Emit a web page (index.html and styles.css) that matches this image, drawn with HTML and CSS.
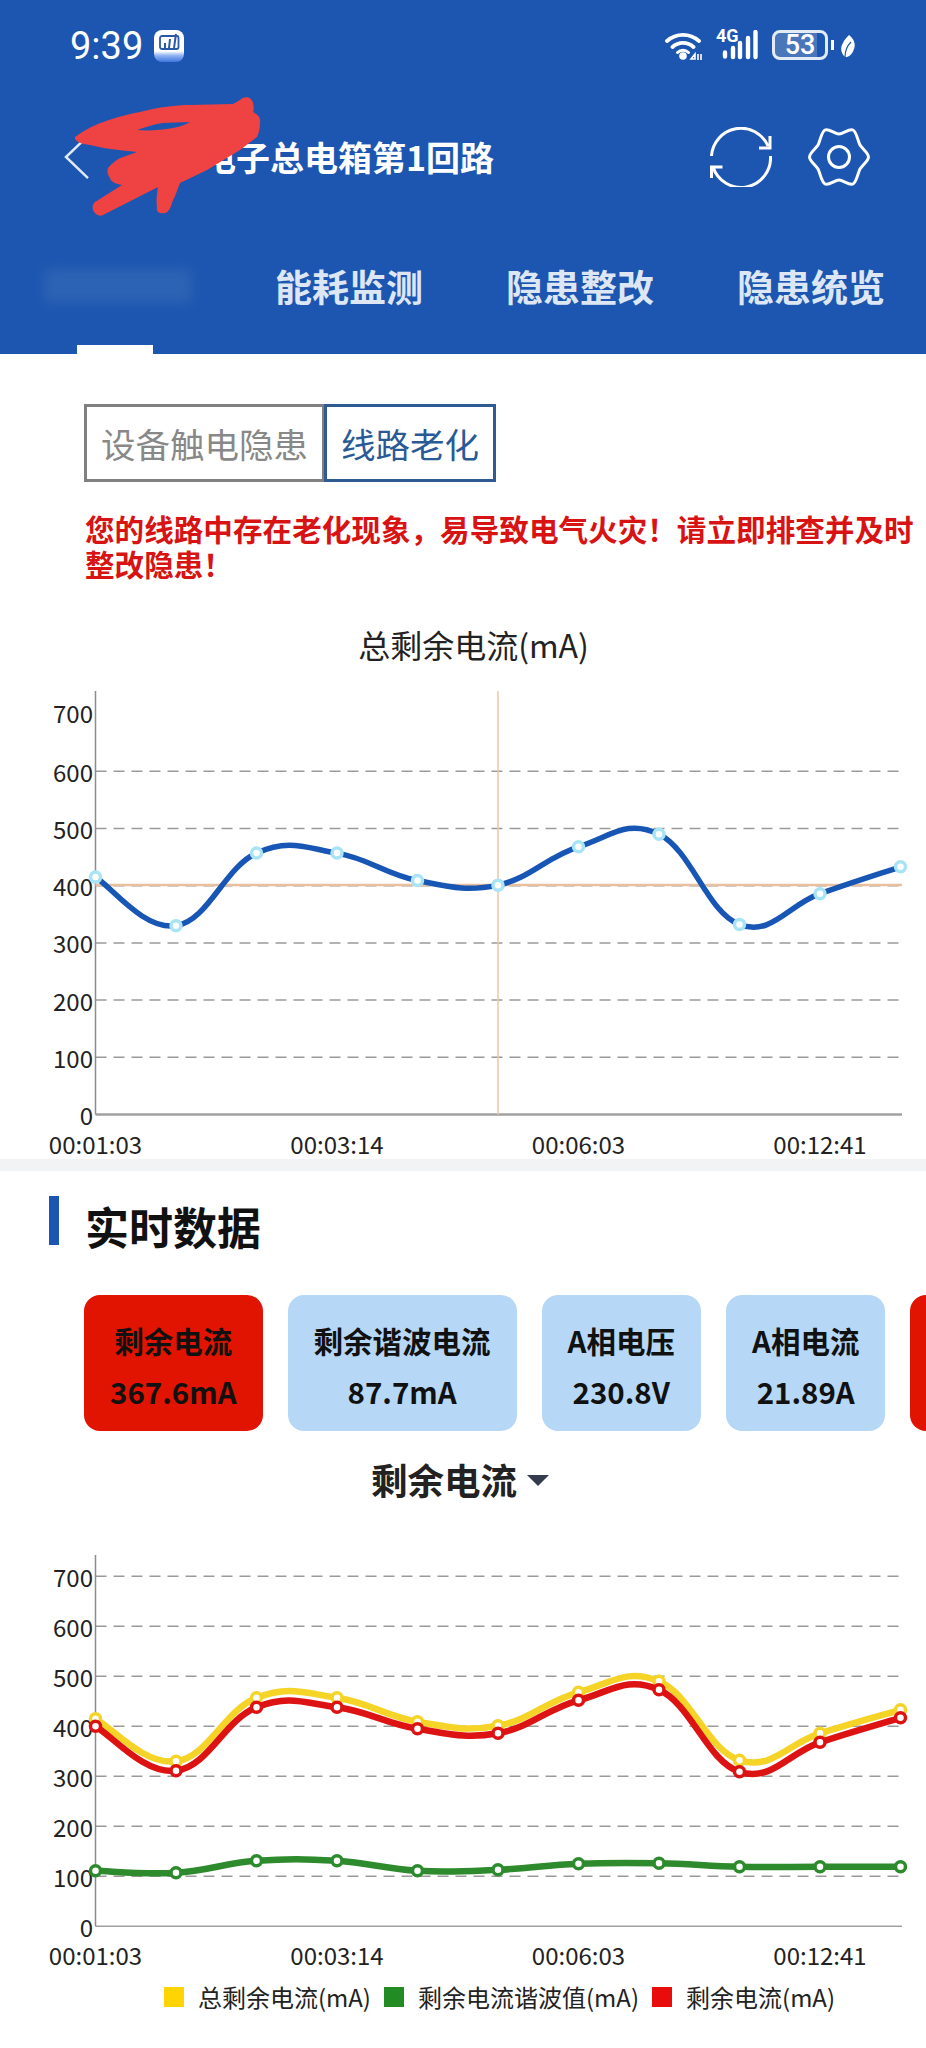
FILE: index.html
```html
<!DOCTYPE html>
<html lang="en">
<head>
  <meta charset="UTF-8">
  <meta name="viewport" content="width=device-width, initial-scale=1.0">
  <title>电子总电箱第1回路</title>
  <link rel="stylesheet" href="styles.css">
</head>
<body>

  <header class="header">
    <div class="status">
      <div class="status-left">
        <span class="time">9:39</span>
        <svg class="app-badge" viewBox="0 0 30 32">
          <defs>
            <linearGradient id="badgeFill" x1="0" y1="0" x2="0" y2="1">
              <stop offset="0.66" stop-color="#ffffff"/>
              <stop offset="0.8" stop-color="#8fb2f2"/>
              <stop offset="1" stop-color="#3f76df"/>
            </linearGradient>
          </defs>
          <rect width="30" height="32" rx="8" fill="url(#badgeFill)"/>
          <path d="M8 6h15a1.500 1.500 0 0 1 1.500 1.500V17a2 2 0 0 1-2 2H8a2 2 0 0 1-2-2V8a2 2 0 0 1 2-2z" fill="none" stroke="#2a5aa6" stroke-width="1.800"/>
          <path d="M11 18v-5M15 18l1-9M20 18l2-14" fill="none" stroke="#2a5aa6" stroke-width="2"/>
        </svg>
      </div>
      <div class="status-right">
        <svg class="wifi" viewBox="0 0 38 30">
          <path d="M2 11a24 24 0 0 1 32 0M7.500 17a15.500 15.500 0 0 1 21 0" fill="none" stroke="#fff" stroke-width="3.800" stroke-linecap="round"/>
          <path d="M12.500 22.500a8 8 0 0 1 11 0" fill="none" stroke="#fff" stroke-width="3" stroke-linecap="round"/>
          <circle cx="18" cy="26" r="3.800" fill="#fff"/>
          <path d="M26 29l4-5v5zM33 24v6M36 24v6" fill="none" stroke="#fff" stroke-width="1.600"/>
        </svg>
        <div class="signal">
          <span class="net">4G</span>
          <svg class="bars" viewBox="0 0 38 30">
            <path d="M5 22.500v4M13 18v9M20 13v14M28 8v19M35.500 2v25" fill="none" stroke="#fff" stroke-width="4.400" stroke-linecap="round"/>
          </svg>
        </div>
        <div class="battery"><span>53</span></div>
        <span class="battery-nub"></span>
        <svg class="leaf" viewBox="0 0 16 24">
          <path d="M9 1c5 4 7 9 5 14-1 4-4 7-7 8-1 0-2 0-3-1-3-4-4-8-1-13 1-3 4-6 6-8z" fill="#fff"/>
          <path d="M5 23c0-7 2-11 6-15" fill="none" stroke="#1c56b0" stroke-width="1.200"/>
        </svg>
      </div>
    </div>

    <div class="nav">
      <svg class="back" viewBox="0 0 28 48">
        <path d="M26 2L3 24l23 22" fill="none" stroke="#dfe8f5" stroke-width="2.600"/>
      </svg>
      <div class="nav-title">电子总电箱第1回路</div>
      <div class="nav-icons">
        <svg class="nav-icon" viewBox="0 0 62 60">
          <path d="M1.500 29A29.500 29.500 0 0 1 58 19M60 9v12H49M60.500 29A29.500 29.500 0 0 1 3 40M1.500 51V40h11" fill="none" stroke="#fff" stroke-width="3"/>
        </svg>
        <svg class="nav-icon" viewBox="0 0 62 60">
          <path d="M31 7C35 7 41.400 1.200 45 3S50 14.500 52 18S60.500 26 60.500 30S54 38.500 52 42S48.600 55.200 45 57S35 53 31 53S20.600 58.800 17 57S12 45.500 10 42S1.500 34 1.500 30S8 21.500 10 18S13.400 4.800 17 3S27 7 31 7Z" fill="none" stroke="#fff" stroke-width="3"/>
          <circle cx="31" cy="30" r="10.500" fill="none" stroke="#fff" stroke-width="3"/>
        </svg>
      </div>
    </div>

    <div class="tabs">
      <div class="tab-blur"></div>
      <div class="tab">能耗监测</div>
      <div class="tab">隐患整改</div>
      <div class="tab">隐患统览</div>
    </div>
    <div class="tab-line"></div>

    <svg class="scribble" viewBox="0 0 300 230">
      <path d="M75 137C95 122 120 116 140 112C160 107 175 105 190 105L233 104L240 100C244 96 251 96 253 103C254 107 254 110 253 112C258 115 261 118 260 122C260 128 259 133 257 137L240 150L207 170L180 183C177 190 176 195 173 200C171 207 169 212 165 213C160 214 156 212 157 208C156 200 157 193 158 187L103 215C99 217 95 214 93 210C92 206 93 204 95 202L122 185C116 184 111 182 110 178C107 174 107 171 108 168C112 163 117 159 123 157L137 152C120 150 105 149 90 145C80 144 74 141 75 137Z" fill="#ef4242"/>
      <path d="M137 130C146 127 155 124 163 123L190 122C185 125 179 127 173 128C161 130 149 131 137 130Z" fill="#1c56b0"/>
    </svg>
  </header>

  <main>
    <div class="switch">
      <div class="switch-btn">设备触电隐患</div>
      <div class="switch-btn active">线路老化</div>
    </div>

    <p class="warning">您的线路中存在老化现象，易导致电气火灾！请立即排查并及时整改隐患！</p>

    <div class="chart-title">总剩余电流(mA)</div>
    <svg id="chart1" class="chart chart-top"></svg>

    <div class="divider"></div>

    <h2 class="section-title">实时数据</h2>

    <div class="cards">
      <div class="card alarm"><div>剩余电流</div><div>367.6mA</div></div>
      <div class="card"><div>剩余谐波电流</div><div>87.7mA</div></div>
      <div class="card"><div>A相电压</div><div>230.8V</div></div>
      <div class="card"><div>A相电流</div><div>21.89A</div></div>
      <div class="card alarm"></div>
    </div>

    <div class="dropdown">
      <span>剩余电流</span>
      <span class="caret"></span>
    </div>

    <svg id="chart2" class="chart chart-bottom"></svg>

    <div class="legend">
      <div class="legend-item"><span class="swatch yellow"></span>总剩余电流(mA)</div>
      <div class="legend-item"><span class="swatch green"></span>剩余电流谐波值(mA)</div>
      <div class="legend-item"><span class="swatch red"></span>剩余电流(mA)</div>
    </div>
  </main>

  <script src="chart.js"></script>
</body>
</html>
```

FILE: styles.css
```css
* {
  box-sizing: border-box;
}

html, body {
  margin: 0;
  padding: 0;
}

body {
  width: 926px;
  height: 2048px;
  overflow: hidden;
  background-color: #fff;
  color: #222;
  font-family: "Noto Sans CJK SC", "Noto Sans", sans-serif;
}

/* header */

.header {
  position: relative;
  display: flex;
  flex-direction: column;
  height: 354px;
  background-color: #1c56b0;
  color: #fff;
}

.status {
  display: flex;
  justify-content: space-between;
  height: 32px;
  margin-top: 30px;
  padding: 0 70px;
}

.status-left {
  display: flex;
  align-items: center;
  gap: 11px;
}

.time {
  font-family: Roboto, sans-serif;
  font-size: 38px;
  line-height: 32px;
}

.app-badge {
  width: 30px;
  height: 32px;
}

.status-right {
  display: flex;
  align-items: flex-start;
}

.wifi {
  width: 38px;
  height: 30px;
}

.signal {
  position: relative;
  width: 38px;
  height: 30px;
  margin-left: 17px;
}

.bars {
  display: block;
  width: 38px;
  height: 30px;
}

.net {
  position: absolute;
  left: -4px;
  top: -3px;
  font-family: Roboto, sans-serif;
  font-size: 18px;
  font-weight: 700;
  line-height: 18px;
}

.battery {
  width: 56px;
  height: 30px;
  margin-left: 14px;
  border: 3px solid #e3ebf7;
  border-radius: 8px;
  background: linear-gradient(to right, #4a76ba 84%, transparent 84%);
  text-align: center;
  font-family: Roboto, sans-serif;
  font-size: 27px;
  font-weight: 500;
  line-height: 24px;
}

.battery-nub {
  width: 3px;
  height: 10px;
  margin: 10px 0 0 3px;
  background-color: #fff;
}

.leaf {
  width: 16px;
  height: 24px;
  margin: 4px 0 0 6px;
}

.nav {
  display: flex;
  align-items: center;
  height: 60px;
  margin-top: 65px;
  padding: 0 56px 0 63px;
}

.back {
  width: 27px;
  height: 46px;
}

.nav-title {
  margin-left: 112px;
  font-size: 34px;
  font-weight: 700;
  line-height: 44px;
}

.nav-icons {
  display: flex;
  gap: 36px;
  margin-left: auto;
}

.nav-icon {
  width: 62px;
  height: 60px;
}

.tabs {
  display: flex;
  align-items: center;
  gap: 83px;
  height: 50px;
  margin-top: 74px;
  padding-left: 44px;
}

.tab {
  color: #dde6f5;
  font-size: 37px;
  font-weight: 700;
  line-height: 50px;
  white-space: nowrap;
}

.tab-blur {
  width: 148px;
  height: 34px;
  background-color: #4a78bb;
  opacity: 0.38;
  filter: blur(6px);
}

.tab-line {
  width: 76px;
  height: 9px;
  margin: auto 0 0 77px;
  background-color: #fff;
}

.scribble {
  position: absolute;
  left: 0;
  top: 0;
  width: 300px;
  height: 230px;
}

/* switch + warning */

.switch {
  display: flex;
  margin: 50px 0 0 84px;
}

.switch-btn {
  height: 78px;
  padding: 0 14px;
  border: 3px solid #808080;
  color: #888;
  font-size: 34.500px;
  line-height: 72px;
  white-space: nowrap;
}

.switch-btn.active {
  margin-left: -1px;
  border-color: #2f5b92;
  color: #2a5a96;
}

.warning {
  margin: 29px 8px 0 85px;
  color: #d81313;
  font-size: 29.600px;
  font-weight: 700;
  line-height: 35px;
}

.chart-title {
  margin-top: 41px;
  height: 44px;
  padding-left: 21px;
  text-align: center;
  font-size: 32px;
  line-height: 44px;
}

/* charts */

.chart {
  display: block;
  width: 926px;
}

.chart-top {
  height: 493px;
}

.chart-bottom {
  height: 470px;
}

.chart text {
  fill: #222;
  font-size: 24px;
}

.divider {
  height: 12px;
  background-color: #f1f3f5;
}

/* realtime data */

.section-title {
  height: 49px;
  margin: 25px 0 0 49px;
  padding-left: 26px;
  border-left: 10px solid #1c56b0;
  color: #111;
  font-size: 44px;
  font-weight: 700;
  line-height: 60px;
  white-space: nowrap;
}

.cards {
  display: flex;
  gap: 25px;
  margin: 50px 0 0 84px;
}

.card {
  flex-shrink: 0;
  height: 136px;
  padding: 20px 26px;
  border-radius: 16px;
  background-color: #b6d8f6;
  color: #111;
  text-align: center;
  font-size: 29.500px;
  font-weight: 700;
  line-height: 51px;
  white-space: nowrap;
}

.card.alarm {
  min-width: 175px;
  background-color: #e01400;
}

.dropdown {
  display: flex;
  align-items: center;
  height: 50px;
  margin: 24px 0 0 371px;
  font-size: 36.500px;
  font-weight: 700;
  line-height: 50px;
}

.caret {
  width: 0;
  height: 0;
  margin: 0 0 0 10px;
  border-left: 11px solid transparent;
  border-right: 11px solid transparent;
  border-top: 11px solid #333b4d;
}

.legend {
  display: flex;
  justify-content: center;
  gap: 13px;
  height: 44px;
  margin-left: 73px;
  font-size: 24px;
  line-height: 44px;
}

.legend-item {
  display: flex;
  align-items: center;
  gap: 14px;
  white-space: nowrap;
}

.swatch {
  width: 20px;
  height: 20px;
}

.swatch.yellow { background-color: #ffd400; }
.swatch.green { background-color: #238b23; }
.swatch.red { background-color: #e80c0c; }
```

FILE: chart.js
```js
// Draws the two line charts. Coordinates are page pixels, the viewBox shifts them.
const SVG_NS = 'http://www.w3.org/2000/svg';
const LEFT = 95.5;
const RIGHT = 902;
const STEP = 80.5;
const TIME_LABELS = ['00:01:03', '00:03:14', '00:06:03', '00:12:41'];

function el(svg, name, attrs, text) {
  const node = document.createElementNS(SVG_NS, name);
  for (const key in attrs) {
    node.setAttribute(key, attrs[key]);
  }
  if (text) {
    node.textContent = text;
  }
  svg.appendChild(node);
  return node;
}

// smooth path through the points, like the chart lib's smooth line
function smoothPath(pts) {
  const k = 0.2;
  let d = `M${pts[0][0]} ${pts[0][1]}`;
  for (let i = 0; i < pts.length - 1; i++) {
    const p0 = pts[i - 1] || pts[i];
    const p1 = pts[i];
    const p2 = pts[i + 1];
    const p3 = pts[i + 2] || p2;
    const c1x = p1[0] + (p2[0] - p0[0]) * k;
    const c1y = p1[1] + (p2[1] - p0[1]) * k;
    const c2x = p2[0] - (p3[0] - p1[0]) * k;
    const c2y = p2[1] - (p3[1] - p1[1]) * k;
    d += `C${c1x} ${c1y} ${c2x} ${c2y} ${p2[0]} ${p2[1]}`;
  }
  return d;
}

function drawChart(cfg) {
  const svg = document.getElementById(cfg.id);
  svg.setAttribute('viewBox', `0 ${cfg.top} 926 ${cfg.height}`);

  const yOf = (v) => cfg.zero - v * cfg.scale;

  // grid + y labels
  for (let v = 0; v <= 700; v += 100) {
    const y = yOf(v);
    if (v > 0 && (v < 700 || cfg.topGrid)) {
      el(svg, 'line', { x1: LEFT, y1: y, x2: RIGHT, y2: y, stroke: '#9a9a9a', 'stroke-width': 1.5, 'stroke-dasharray': '11 7' });
    }
    const labelY = v === 700 ? y + cfg.label700 : y;
    el(svg, 'text', { x: 93, y: labelY, 'text-anchor': 'end', 'dominant-baseline': 'central' }, String(v));
  }

  // axes
  el(svg, 'line', { x1: LEFT, y1: cfg.axisTop, x2: LEFT, y2: cfg.zero, stroke: '#8c8c8c', 'stroke-width': 1.5 });
  el(svg, 'line', { x1: LEFT, y1: cfg.zero, x2: RIGHT, y2: cfg.zero, stroke: '#a0a0a0', 'stroke-width': cfg.axisWidth });

  // x labels
  TIME_LABELS.forEach((label, i) => {
    el(svg, 'text', { x: LEFT + STEP * 3 * i, y: cfg.labelY, 'text-anchor': 'middle', 'dominant-baseline': 'central' }, label);
  });

  // tooltip cross lines
  if (cfg.cross) {
    el(svg, 'line', { x1: cfg.cross.x, y1: cfg.axisTop, x2: cfg.cross.x, y2: cfg.zero, stroke: '#eec6a6', 'stroke-width': 1.5 });
    el(svg, 'line', { x1: LEFT, y1: cfg.cross.y, x2: RIGHT, y2: cfg.cross.y, stroke: '#e8c09e', 'stroke-width': 2.5 });
  }

  cfg.series.forEach((s) => {
    const pts = s.values.map((v, i) => [LEFT + STEP * i, yOf(v)]);
    el(svg, 'path', { d: smoothPath(pts), fill: 'none', stroke: s.color, 'stroke-width': cfg.lineWidth });
    pts.forEach((p) => {
      el(svg, 'circle', { cx: p[0], cy: p[1], r: 5, fill: '#fff', stroke: s.dot, 'stroke-width': 3.5 });
    });
  });
}

const total = [415, 330, 457, 457, 409, 401, 468, 490, 332, 386, 433];
const harmonic = [111, 107, 131, 131, 111, 113, 125, 126, 119, 119, 119];
const residual = [400, 311, 438, 438, 395, 386, 452, 473, 309, 368, 417];

drawChart({
  id: 'chart1',
  top: 666,
  height: 493,
  zero: 1114.5,
  scale: 0.572,
  axisTop: 691,
  axisWidth: 2.5,
  label700: -2,
  labelY: 1143,
  lineWidth: 5.5,
  cross: { x: 498, y: 885 },
  series: [{ values: total, color: '#1756b4', dot: '#a8e4f6' }]
});

drawChart({
  id: 'chart2',
  top: 1505,
  height: 470,
  zero: 1926.3,
  scale: 0.5,
  axisTop: 1555,
  axisWidth: 1.5,
  label700: 0,
  topGrid: true,
  labelY: 1954,
  lineWidth: 6.5,
  series: [
    { values: total, color: '#f5d327', dot: '#f5d327' },
    { values: harmonic, color: '#2d8a2d', dot: '#2d8a2d' },
    { values: residual, color: '#dd1212', dot: '#dd1212' }
  ]
});
```
